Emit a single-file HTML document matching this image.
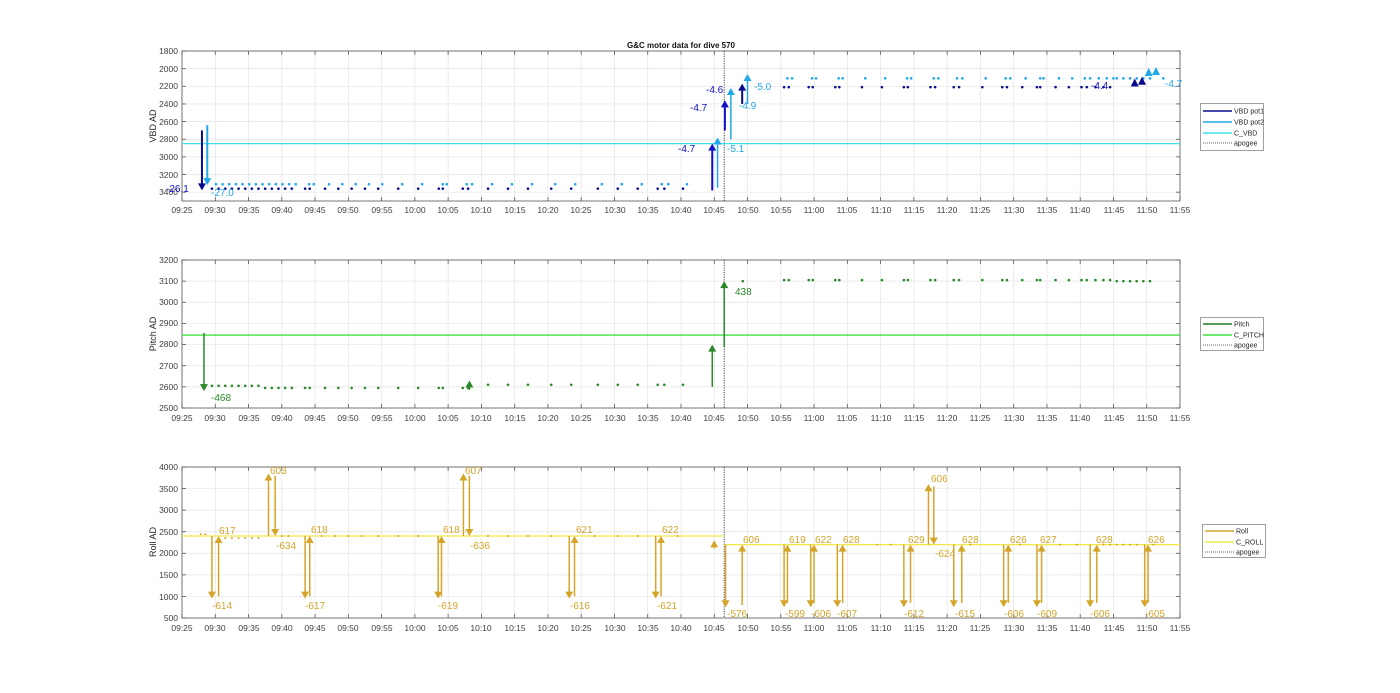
<!DOCTYPE html>
<html><head><meta charset="utf-8"><style>
html,body{margin:0;padding:0;background:#fff;width:1400px;height:693px;overflow:hidden}
svg{display:block;font-family:"Liberation Sans",sans-serif}
.tk{font-size:8.5px;fill:#404040}
.lg{font-size:7px;fill:#262626}
</style></head><body>
<svg id="s" width="1400" height="693" xmlns="http://www.w3.org/2000/svg">
<g id="g"></g>
<text x="681" y="48" text-anchor="middle" font-size="8" font-weight="bold" fill="#111">G&amp;C motor data for dive 570</text>
<text transform="translate(156,126) rotate(-90)" text-anchor="middle" font-size="9" fill="#262626">VBD AD</text>
<text transform="translate(156,334) rotate(-90)" text-anchor="middle" font-size="9" fill="#262626">Pitch AD</text>
<text transform="translate(156,542) rotate(-90)" text-anchor="middle" font-size="9" fill="#262626">Roll AD</text>
<g class="tk" text-anchor="end">
<text x="178" y="54">1800</text><text x="178" y="72">2000</text><text x="178" y="89">2200</text><text x="178" y="107">2400</text><text x="178" y="125">2600</text><text x="178" y="142">2800</text><text x="178" y="160">3000</text><text x="178" y="178">3200</text><text x="178" y="195">3400</text>
<text x="178" y="263">3200</text><text x="178" y="284">3100</text><text x="178" y="305">3000</text><text x="178" y="326">2900</text><text x="178" y="347">2800</text><text x="178" y="369">2700</text><text x="178" y="390">2600</text><text x="178" y="411">2500</text>
<text x="178" y="470">4000</text><text x="178" y="492">3500</text><text x="178" y="513">3000</text><text x="178" y="535">2500</text><text x="178" y="556">2000</text><text x="178" y="578">1500</text><text x="178" y="600">1000</text><text x="178" y="621">500</text>
</g>
<g class="tk" text-anchor="middle">
<g transform="translate(0,213)"><text x="182">09:25</text><text x="215">09:30</text><text x="249">09:35</text><text x="282">09:40</text><text x="315">09:45</text><text x="348">09:50</text><text x="382">09:55</text><text x="415">10:00</text><text x="448">10:05</text><text x="481">10:10</text><text x="515">10:15</text><text x="548">10:20</text><text x="581">10:25</text><text x="615">10:30</text><text x="648">10:35</text><text x="681">10:40</text><text x="714">10:45</text><text x="748">10:50</text><text x="781">10:55</text><text x="814">11:00</text><text x="847">11:05</text><text x="881">11:10</text><text x="914">11:15</text><text x="947">11:20</text><text x="980">11:25</text><text x="1014">11:30</text><text x="1047">11:35</text><text x="1080">11:40</text><text x="1114">11:45</text><text x="1147">11:50</text><text x="1180">11:55</text></g>
<g transform="translate(0,421)"><text x="182">09:25</text><text x="215">09:30</text><text x="249">09:35</text><text x="282">09:40</text><text x="315">09:45</text><text x="348">09:50</text><text x="382">09:55</text><text x="415">10:00</text><text x="448">10:05</text><text x="481">10:10</text><text x="515">10:15</text><text x="548">10:20</text><text x="581">10:25</text><text x="615">10:30</text><text x="648">10:35</text><text x="681">10:40</text><text x="714">10:45</text><text x="748">10:50</text><text x="781">10:55</text><text x="814">11:00</text><text x="847">11:05</text><text x="881">11:10</text><text x="914">11:15</text><text x="947">11:20</text><text x="980">11:25</text><text x="1014">11:30</text><text x="1047">11:35</text><text x="1080">11:40</text><text x="1114">11:45</text><text x="1147">11:50</text><text x="1180">11:55</text></g>
<g transform="translate(0,631)"><text x="182">09:25</text><text x="215">09:30</text><text x="249">09:35</text><text x="282">09:40</text><text x="315">09:45</text><text x="348">09:50</text><text x="382">09:55</text><text x="415">10:00</text><text x="448">10:05</text><text x="481">10:10</text><text x="515">10:15</text><text x="548">10:20</text><text x="581">10:25</text><text x="615">10:30</text><text x="648">10:35</text><text x="681">10:40</text><text x="714">10:45</text><text x="748">10:50</text><text x="781">10:55</text><text x="814">11:00</text><text x="847">11:05</text><text x="881">11:10</text><text x="914">11:15</text><text x="947">11:20</text><text x="980">11:25</text><text x="1014">11:30</text><text x="1047">11:35</text><text x="1080">11:40</text><text x="1114">11:45</text><text x="1147">11:50</text><text x="1180">11:55</text></g>
</g>
<g font-size="10">
<text x="166" y="192" fill="#1010c8">-26.1</text>
<text x="211" y="196" fill="#22a8e8">-27.0</text>
<text x="678" y="152" fill="#1010c8">-4.7</text>
<text x="690" y="111" fill="#1010c8">-4.7</text>
<text x="706" y="93" fill="#1010c8">-4.6</text>
<text x="727" y="152" fill="#22a8e8">-5.1</text>
<text x="739" y="109" fill="#22a8e8">-4.9</text>
<text x="754" y="90" fill="#22a8e8">-5.0</text>
<text x="1091" y="89" fill="#1010c8">-4.4</text>
<text x="1165" y="87" fill="#22a8e8">-4.7</text>
</g>
<g font-size="10" fill="#2a8a2a">
<text x="211" y="401">-468</text>
<text x="735" y="295">438</text>
</g>
<g font-size="10" fill="#d4a52a">
<text x="219" y="534">617</text><text x="212" y="609">-614</text>
<text x="270" y="474">603</text><text x="276" y="549">-634</text>
<text x="311" y="533">618</text><text x="305" y="609">-617</text>
<text x="443" y="533">618</text><text x="438" y="609">-619</text>
<text x="465" y="474">607</text><text x="470" y="549">-636</text>
<text x="576" y="533">621</text><text x="570" y="609">-616</text>
<text x="662" y="533">622</text><text x="657" y="609">-621</text>
<text x="743" y="543">606</text><text x="727" y="617">-576</text>
<text x="789" y="543">619</text><text x="785" y="617">-599</text>
<text x="815" y="543">622</text><text x="811" y="617">-606</text>
<text x="843" y="543">628</text><text x="837" y="617">-607</text>
<text x="908" y="543">629</text><text x="904" y="617">-612</text>
<text x="931" y="482">606</text><text x="935" y="557">-624</text>
<text x="962" y="543">628</text><text x="955" y="617">-615</text>
<text x="1010" y="543">626</text><text x="1004" y="617">-606</text>
<text x="1040" y="543">627</text><text x="1037" y="617">-609</text>
<text x="1096" y="543">628</text><text x="1090" y="617">-606</text>
<text x="1148" y="543">626</text><text x="1145" y="617">-605</text>
</g>
<rect x="1200.5" y="103.5" width="63" height="47" fill="#fff" stroke="#888" stroke-width="0.8"/>
<line x1="1203" y1="111" x2="1232" y2="111" stroke="#0a0a90" stroke-width="1.5"/>
<line x1="1203" y1="122" x2="1232" y2="122" stroke="#22a8e8" stroke-width="1.5"/>
<line x1="1203" y1="133" x2="1232" y2="133" stroke="#40e0e8" stroke-width="1.5"/>
<line x1="1203" y1="143" x2="1232" y2="143" stroke="#333" stroke-width="0.8" stroke-dasharray="1,1"/>
<g class="lg"><text x="1234" y="113.5">VBD pot1</text><text x="1234" y="124.5">VBD pot2</text><text x="1234" y="135.5">C_VBD</text><text x="1234" y="145.5">apogee</text></g>
<rect x="1200.5" y="317.5" width="63" height="33" fill="#fff" stroke="#888" stroke-width="0.8"/>
<line x1="1203" y1="324" x2="1232" y2="324" stroke="#1f7a1f" stroke-width="1.5"/>
<line x1="1203" y1="335" x2="1232" y2="335" stroke="#40e040" stroke-width="1.5"/>
<line x1="1203" y1="345" x2="1232" y2="345" stroke="#333" stroke-width="0.8" stroke-dasharray="1,1"/>
<g class="lg"><text x="1234" y="326.5">Pitch</text><text x="1234" y="337.5">C_PITCH</text><text x="1234" y="347.5">apogee</text></g>
<rect x="1202.5" y="524.5" width="63" height="33" fill="#fff" stroke="#888" stroke-width="0.8"/>
<line x1="1205" y1="531" x2="1234" y2="531" stroke="#d4a52a" stroke-width="1.5"/>
<line x1="1205" y1="542" x2="1234" y2="542" stroke="#f2e84a" stroke-width="1.5"/>
<line x1="1205" y1="552" x2="1234" y2="552" stroke="#333" stroke-width="0.8" stroke-dasharray="1,1"/>
<g class="lg"><text x="1236" y="533.5">Roll</text><text x="1236" y="544.5">C_ROLL</text><text x="1236" y="554.5">apogee</text></g>
</svg>
<script>
(function(){
var NS="http://www.w3.org/2000/svg",g=document.getElementById("g");
function el(n,a){var e=document.createElementNS(NS,n);for(var k in a)e.setAttribute(k,a[k]);g.appendChild(e);return e;}
function X(m){return 182+(m-25)*6.653;}
var P=[{t:51,b:201,y:function(v){return 51+(v-1800)*150/1700;},ty:[1800,2000,2200,2400,2600,2800,3000,3200,3400]},
{t:260,b:408,y:function(v){return 260+(3200-v)*148/700;},ty:[2500,2600,2700,2800,2900,3000,3100,3200]},
{t:467,b:618,y:function(v){return 467+(4000-v)*151/3500;},ty:[500,1000,1500,2000,2500,3000,3500,4000]}];
P.forEach(function(p){
 for(var i=0;i<=30;i++){var x=182+i*33.267;
  el("line",{x1:x,y1:p.t,x2:x,y2:p.b,stroke:"#e4e4e4","stroke-width":0.7});
  el("line",{x1:x,y1:p.t,x2:x,y2:p.t+4,stroke:"#555","stroke-width":0.8});
  el("line",{x1:x,y1:p.b,x2:x,y2:p.b-4,stroke:"#555","stroke-width":0.8});}
 p.ty.forEach(function(v){var y=p.y(v);
  el("line",{x1:182,y1:y,x2:1180,y2:y,stroke:"#e4e4e4","stroke-width":0.7});
  el("line",{x1:182,y1:y,x2:186,y2:y,stroke:"#555","stroke-width":0.8});
  el("line",{x1:1176,y1:y,x2:1180,y2:y,stroke:"#555","stroke-width":0.8});});
 el("rect",{x:182,y:p.t,width:998,height:p.b-p.t,fill:"none",stroke:"#555","stroke-width":0.8});
 var ax=X(106.5);
 el("line",{x1:ax,y1:p.t,x2:ax,y2:p.b,stroke:"#333","stroke-width":0.9,"stroke-dasharray":"1.2,1.2"});
});
function dot(x,y,c,r){el("circle",{cx:x,cy:y,r:r||1.3,fill:c});}
function arrow(x,y0,y1,c,w){var d=y1<y0?1:-1;var h=7;
 el("line",{x1:x,y1:y0,x2:x,y2:y1+d*h*0.8,stroke:c,"stroke-width":w||1.5});
 el("polygon",{points:(x-4)+","+(y1+d*h)+" "+(x+4)+","+(y1+d*h)+" "+x+","+y1,fill:c});}
var c1="#1010c8",c1d="#0a0a90",c2="#22a8e8",cg="#2a8a2a",cr="#d4a52a";
var p=P[0];
el("line",{x1:182,y1:p.y(2850),x2:1180,y2:p.y(2850),stroke:"#40e0e8","stroke-width":1.3});
var tb=[29.5,30.5,31.5,32.5,33.5,34.5,35.5,36.5,37.5,38.5,39.5,40.5,41.5,43.5,44.2,46.5,48.5,50.5,52.5,54.5,57.5,60.5,63.6,64.2,67.2,68,71,74,77,80.5,83.5,87.5,90.5,93.5,96.5,97.5,100.3];
tb.forEach(function(m){dot(X(m),p.y(3360),c1d);dot(X(m+0.6),p.y(3310),c2);});
var ta=[115.5,116.2,119.2,119.8,123.2,123.8,127.2,130.2,133.5,134.1,137.5,138.2,141,141.8,145.3,148.3,149,151.3,153.5,154,156.3,158.3,160.2,161,162.3,163.5,164.5];
ta.forEach(function(m){dot(X(m),p.y(2210),c1d);dot(X(m+0.5),p.y(2110),c2);});
[165.5,166.5,167.5,168.5,169.5,170.5,172.5].forEach(function(m){dot(X(m),p.y(2110),c2);});
arrow(X(28),p.y(2700),p.y(3380),c1d,2);
arrow(X(28.8),p.y(2640),p.y(3320),c2,2);
arrow(X(104.7),p.y(3380),p.y(2850),c1,2);
arrow(X(105.5),p.y(3350),p.y(2780),c2,1.5);
arrow(X(106.6),p.y(2700),p.y(2360),c1,2);
arrow(X(107.5),p.y(2800),p.y(2220),c2,1.5);
arrow(X(109.2),p.y(2400),p.y(2170),c1d,2);
arrow(X(110),p.y(2400),p.y(2060),c2,1.5);
[[168.2,2180,c1d],[169.3,2160,c1d],[170.3,2060,c2],[171.4,2050,c2]].forEach(function(a){var x=X(a[0]),y=p.y(a[1]);el("polygon",{points:(x-4)+","+(y+2)+" "+(x+4)+","+(y+2)+" "+x+","+(y-6),fill:a[2]});});
p=P[1];
el("line",{x1:182,y1:p.y(2845),x2:1180,y2:p.y(2845),stroke:"#40e040","stroke-width":1.3});
tb.forEach(function(m,i){dot(X(m),p.y(2600+(m>70?10:(m<37?5:-5))),cg);});
ta.forEach(function(m){dot(X(m),p.y(3105),cg);});
[109.3,165.5,166.5,167.5,168.5,169.5,170.5].forEach(function(m){dot(X(m),p.y(3100),cg);});
arrow(X(28.3),p.y(2855),p.y(2580),cg,1.5);
arrow(X(68.2),p.y(2585),p.y(2630),cg,1.5);
arrow(X(104.7),p.y(2600),p.y(2800),cg,1.5);
arrow(X(106.5),p.y(2790),p.y(3100),cg,1.5);
p=P[2];
el("line",{x1:182,y1:p.y(2400),x2:X(106.5),y2:p.y(2400),stroke:"#f2e84a","stroke-width":1.3});
el("line",{x1:X(106.5),y1:p.y(2200),x2:1180,y2:p.y(2200),stroke:"#f2e84a","stroke-width":1.3});
[27.8,28.5].forEach(function(m){dot(X(m),p.y(2440),cr,1);});
[31.5,32.5,33.5,34.5,35.5,36.5].forEach(function(m){dot(X(m),p.y(2350),cr,1);});
[40,41,46,48,50,52,54.5,57.5,60.5,71,74,77,80.5,87,90.5,93.5,99.5].forEach(function(m){dot(X(m),p.y(2400),cr,1);});
[129.5,131.5,143.5,151,157,159.5,163.5,164.5,165.5,166.5,167.5,168.5,171].forEach(function(m){dot(X(m),p.y(2200),cr,1);});
function pd(md,mu,lvl){arrow(X(md),p.y(lvl),p.y(950),cr,1.5);arrow(X(mu),p.y(1000),p.y(lvl),cr,1.5);}
function pu(mu,md,lvl,top){arrow(X(mu),p.y(lvl),p.y(top),cr,1.5);arrow(X(md),p.y(top-50),p.y(lvl),cr,1.5);}
pd(29.5,30.5,2400);pu(38,39,2400,3850);pd(43.5,44.2,2400);pd(63.5,64,2400);pu(67.3,68.2,2400,3850);
pd(83.2,84,2400);pd(96.2,97,2400);
arrow(X(105),p.y(2100),p.y(2300),cr,1);
arrow(X(106.7),p.y(2200),p.y(750),cr,1.5);arrow(X(109.2),p.y(800),p.y(2200),cr,1.5);
[[115.5,116],[119.5,120],[123.5,124.3],[133.5,134.5],[141,142.2],[148.5,149.2],[153.5,154.2],[161.5,162.5],[169.7,170.2]].forEach(function(a){
 arrow(X(a[0]),p.y(2200),p.y(750),cr,1.5);arrow(X(a[1]),p.y(850),p.y(2200),cr,1.5);});
pu(137.2,138,2200,3600);
})();
</script>
</body></html>
